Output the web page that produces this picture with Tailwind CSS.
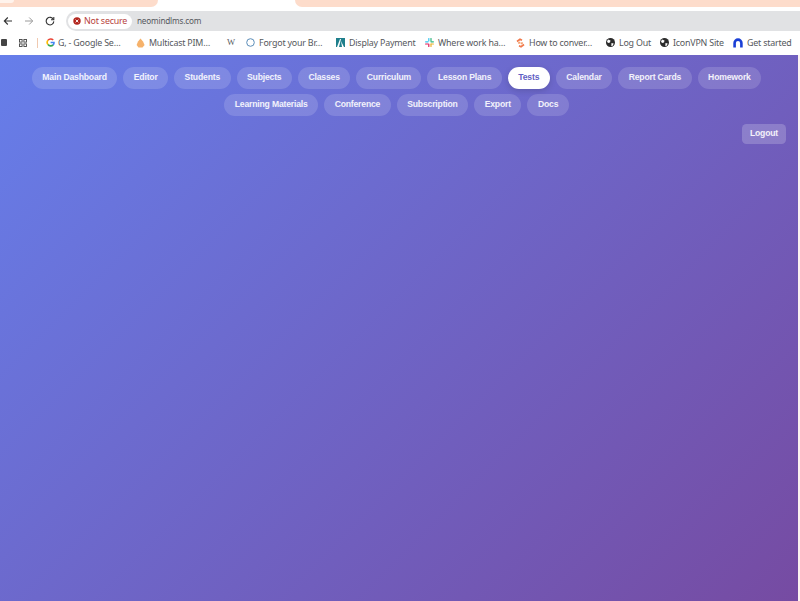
<!DOCTYPE html>
<html lang="en">
<head>
  <meta charset="UTF-8">
  <script src="https://cdn.jsdelivr.net/npm/@tailwindcss/browser@4"></script>
  <title>NeoMind LMS</title>
</head>
<body class="w-[800px] h-[601px] overflow-hidden bg-[#fdf3f0] font-['Liberation_Sans',sans-serif]">
  <!-- Browser tab strip -->
  <div class="relative flex h-[7px] bg-white">
    <div class="w-[158px] rounded-br-[8px] bg-[#fddccb]"></div>
    <div class="ml-[137px] flex-1 rounded-bl-[8px] bg-[#fddccb]"></div>
    <div class="absolute left-0 top-0 h-[3px] w-[14px] rounded-br-[4px] bg-[#fff3ec]"></div>
  </div>

  <!-- Toolbar -->
  <div class="flex h-[24px] items-end bg-white font-['Noto_Sans',sans-serif] tracking-[-0.2px]">
    <div class="flex h-[20px] w-[66px] items-center text-[#3c4043]">
      <svg class="ml-[3px]" width="10" height="10" viewBox="0 0 10 10" fill="none" stroke="#333" stroke-width="1.1"><path d="M9 5H1.5M4.8 1.5 1.3 5l3.5 3.5"/></svg>
      <svg class="ml-[11px]" width="10" height="10" viewBox="0 0 10 10" fill="none" stroke="#9a9a9a" stroke-width="1"><path d="M1 5h7.5M5.2 1.5 8.7 5 5.2 8.5"/></svg>
      <svg class="ml-[11px]" width="10" height="10" viewBox="0 0 10 10" fill="none" stroke="#333" stroke-width="1.1"><path d="M8.4 3.4A3.8 3.8 0 1 0 8.8 5.4"/><path d="M8.8 1v2.8H6" /></svg>
    </div>
    <div class="flex h-[20px] flex-1 items-center rounded-l-[10px] bg-[#e1e2e4] pl-[2px]">
      <div class="flex h-[15px] w-[64px] items-center rounded-full bg-white pl-[5px]">
        <svg width="8" height="8" viewBox="0 0 8 8"><circle cx="4" cy="4" r="3.7" fill="#b3261e"/><path d="M2.6 2.6l2.8 2.8M5.4 2.6 2.6 5.4" stroke="#fff" stroke-width="0.9"/></svg>
        <span class="ml-[3px] whitespace-nowrap text-[8.9px] text-[#b8433c]">Not secure</span>
      </div>
      <span class="ml-[5px] whitespace-nowrap text-[8.2px] text-[#55585c]">neomindlms.com</span>
    </div>
  </div>

  <!-- Bookmarks bar -->
  <div class="flex h-[24px] items-center bg-white pb-[1px] pl-[1px] font-['Noto_Sans',sans-serif] text-[8.9px] tracking-[-0.2px] text-[#55585c]">
    <div class="h-[7px] w-[6px] rounded-[1px] bg-[#444]"></div>
    <svg class="ml-[12px]" width="8" height="8" viewBox="0 0 8 8" fill="none" stroke="#444" stroke-width="0.9"><rect x="0.5" y="0.5" width="2.6" height="2.6"/><rect x="4.9" y="0.5" width="2.6" height="2.6"/><rect x="0.5" y="4.9" width="2.6" height="2.6"/><rect x="4.9" y="4.9" width="2.6" height="2.6"/></svg>
    <div class="ml-[10px] h-[10px] w-px bg-[#f0c9b0]"></div>

    <svg class="ml-[8px]" width="9" height="9" viewBox="0 0 9 9" fill="none" stroke-width="1.6"><path d="M7.2 2A3.5 3.5 0 0 0 2 2.2" stroke="#ea4335"/><path d="M2 2.2a3.5 3.5 0 0 0 0 4.4" stroke="#fbbc05"/><path d="M2 6.6a3.5 3.5 0 0 0 5.2.3" stroke="#34a853"/><path d="M7.2 6.9A3.3 3.3 0 0 0 8 4.5H4.6" stroke="#4285f4"/></svg>
    <span class="ml-[3px] w-[66px] whitespace-nowrap">G, - Google Se…</span>

    <svg class="ml-[12px]" width="9" height="10" viewBox="0 0 9 10"><path d="M4.5.5 7 3.5 8.6 7 6.5 9.5h-4L.6 7 2 3.5z" fill="#f6b26b"/></svg>
    <span class="ml-[4px] w-[62px] whitespace-nowrap">Multicast PIM…</span>

    <span class="ml-[16px] w-[9px] font-['Liberation_Serif',serif] text-[8.6px]">W</span>

    <svg class="ml-[10px]" width="9" height="9" viewBox="0 0 9 9" fill="none"><circle cx="4.5" cy="4.5" r="3.8" stroke="#5b8db8" stroke-width="1"/></svg>
    <span class="ml-[4px] w-[65px] whitespace-nowrap">Forgot your Br…</span>

    <svg class="ml-[12px]" width="9" height="9" viewBox="0 0 9 9"><rect width="9" height="9" fill="#1f7f8c"/><path d="M1 9 4 1h1L3 9zM5 3l3 6H6z" fill="#fff"/></svg>
    <span class="ml-[4px] w-[66px] whitespace-nowrap">Display Payment</span>

    <svg class="ml-[10px]" width="9" height="9" viewBox="0 0 9 9"><rect x="0" y="3.2" width="3.6" height="1.2" rx="0.6" fill="#36c5f0"/><rect x="3.2" y="0" width="1.2" height="3.6" rx="0.6" fill="#36c5f0"/><rect x="5.4" y="0" width="1.2" height="3.6" rx="0.6" fill="#2eb67d"/><rect x="5.4" y="3.2" width="3.6" height="1.2" rx="0.6" fill="#2eb67d"/><rect x="5.4" y="5.4" width="3.6" height="1.2" rx="0.6" fill="#ecb22e"/><rect x="5.4" y="5.4" width="1.2" height="3.6" rx="0.6" fill="#ecb22e"/><rect x="0" y="5.4" width="3.6" height="1.2" rx="0.6" fill="#e01e5a"/><rect x="3.2" y="5.4" width="1.2" height="3.6" rx="0.6" fill="#e01e5a"/></svg>
    <span class="ml-[4px] w-[68px] whitespace-nowrap">Where work ha…</span>

    <svg class="ml-[10px]" width="9" height="10" viewBox="0 0 9 10" fill="none" stroke="#f0784a" stroke-width="1.7"><path d="M1 3.5 4 1.3l2 1M8 6.5 5 8.7l-2-1"/><path d="M2.2 5.2l2-.8M4.8 5.6l2-.8" stroke="#f5a06f"/></svg>
    <span class="ml-[4px] w-[65px] whitespace-nowrap">How to conver…</span>

    <svg class="ml-[12px]" width="9" height="9" viewBox="0 0 9 9"><circle cx="4.5" cy="4.5" r="4.5" fill="#2b2b2b"/><path d="M2 1.5 4.5 2.5 4 4.5 2 5 1 3.5zM5.5 5l2.2.5-1 2.3-1.4.2z" fill="#fff"/></svg>
    <span class="ml-[4px] w-[32px] whitespace-nowrap">Log Out</span>

    <svg class="ml-[9px]" width="9" height="9" viewBox="0 0 9 9"><circle cx="4.5" cy="4.5" r="4.5" fill="#2b2b2b"/><path d="M2 1.5 4.5 2.5 4 4.5 2 5 1 3.5zM5.5 5l2.2.5-1 2.3-1.4.2z" fill="#fff"/></svg>
    <span class="ml-[4px] w-[51px] whitespace-nowrap">IconVPN Site</span>

    <svg class="ml-[9px]" width="10" height="10" viewBox="0 0 10 10" fill="none"><path d="M1.6 9.5V5a3.4 3.4 0 0 1 6.8 0v4.5" stroke="#1a3fd6" stroke-width="2.6"/></svg>
    <span class="ml-[4px] whitespace-nowrap">Get started</span>
  </div>

  <!-- Page -->
  <div class="h-[546px] w-[798px] bg-[linear-gradient(135deg,#667eea_0%,#764ba2_100%)]">
    <nav class="flex flex-wrap justify-center gap-x-[6px] gap-y-[5.5px] pr-[5px] pt-[12px] text-[8.6px] font-bold tracking-[-0.17px] text-white/90">
      <a class="flex h-[21.5px] items-center rounded-full bg-white/15 px-[10.5px]">Main Dashboard</a>
      <a class="flex h-[21.5px] items-center rounded-full bg-white/15 px-[10.5px]">Editor</a>
      <a class="flex h-[21.5px] items-center rounded-full bg-white/15 px-[10.5px]">Students</a>
      <a class="flex h-[21.5px] items-center rounded-full bg-white/15 px-[10.5px]">Subjects</a>
      <a class="flex h-[21.5px] items-center rounded-full bg-white/15 px-[10.5px]">Classes</a>
      <a class="flex h-[21.5px] items-center rounded-full bg-white/15 px-[10.5px]">Curriculum</a>
      <a class="flex h-[21.5px] items-center rounded-full bg-white/15 px-[10.5px]">Lesson Plans</a>
      <a class="flex h-[21.5px] items-center rounded-full bg-white px-[10.5px] text-[#5f5fc4] shadow-[0_2px_6px_rgba(0,0,0,0.15)]">Tests</a>
      <a class="flex h-[21.5px] items-center rounded-full bg-white/15 px-[10.5px]">Calendar</a>
      <a class="flex h-[21.5px] items-center rounded-full bg-white/15 px-[10.5px]">Report Cards</a>
      <a class="flex h-[21.5px] items-center rounded-full bg-white/15 px-[10.5px]">Homework</a>
      <a class="flex h-[21.5px] items-center rounded-full bg-white/15 px-[10.5px]">Learning Materials</a>
      <a class="flex h-[21.5px] items-center rounded-full bg-white/15 px-[10.5px]">Conference</a>
      <a class="flex h-[21.5px] items-center rounded-full bg-white/15 px-[10.5px]">Subscription</a>
      <a class="flex h-[21.5px] items-center rounded-full bg-white/15 px-[10.5px]">Export</a>
      <a class="flex h-[21.5px] items-center rounded-full bg-white/15 px-[10.5px]">Docs</a>
    </nav>
    <div class="mt-[8.5px] flex justify-end pr-[12px]">
      <button class="flex h-[19.5px] items-center rounded-[4.5px] bg-white/20 px-[8px] text-[8.6px] font-bold tracking-[-0.17px] text-white/90">Logout</button>
    </div>
  </div>
</body>
</html>
